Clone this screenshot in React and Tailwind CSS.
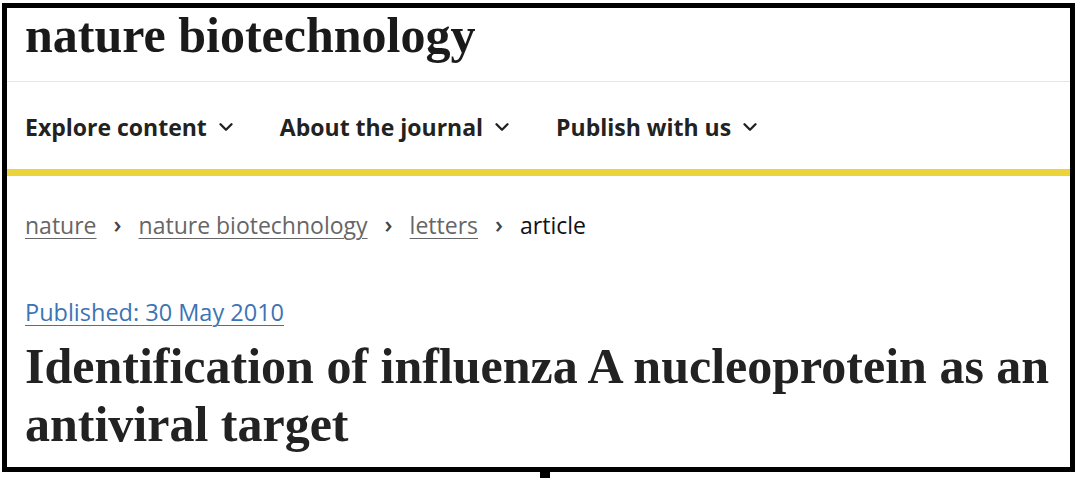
import { ChevronDown } from 'lucide-react'

const navItems = ['Explore content', 'About the journal', 'Publish with us']

const crumbs = ['nature', 'nature biotechnology', 'letters']

export default function App() {
  return (
    <div className="w-[1078px] h-[478px] bg-white overflow-hidden">
      <div className="ml-[2px] mt-[3px] w-[1073px] h-[469px] border-[5px] border-black bg-white flex flex-col overflow-hidden">

        {/* ── Logo ── */}
        <div className="h-[74px] border-b border-[#e6e6e6] px-[18px] flex items-start">
          <span className="font-['Liberation_Serif',serif] font-bold text-[50px] leading-none tracking-[0px] text-[#1a1a1a] mt-[2px]">
            nature biotechnology
          </span>
        </div>

        {/* ── Nav ── */}
        <nav className="h-[87px] px-[18px] flex items-center gap-[43px] pt-[3px]">
          {navItems.map((item) => (
            <div key={item} className="flex items-center gap-[8px]">
              <span className="font-['Open_Sans',sans-serif] font-bold text-[23px] text-[#222]">{item}</span>
              <ChevronDown size={22} strokeWidth={2.6} className="text-[#222]" />
            </div>
          ))}
        </nav>
        <div className="h-[7px] bg-[#ead43a]" />

        {/* ── Breadcrumb ── */}
        <div className="px-[18px] pt-[34px] flex items-center gap-[17px] font-['Open_Sans',sans-serif] text-[23px] leading-[30px]">
          {crumbs.map((c) => (
            <div key={c} className="flex items-center gap-[17px]">
              <span className="text-[#666] underline underline-offset-[4px] decoration-1">{c}</span>
              <span className="text-[#444] text-[24px] font-semibold leading-none -mt-[3px]">›</span>
            </div>
          ))}
          <span className="text-[#111]">article</span>
        </div>

        {/* ── Published ── */}
        <div className="px-[18px] pt-[57px] font-['Open_Sans',sans-serif] text-[23.5px] leading-[30px]">
          <span className="text-[#3b74b5] underline underline-offset-[4px] decoration-1">Published: 30 May 2010</span>
        </div>

        {/* ── Title ── */}
        <h1 className="px-[18px] pt-[10px] font-['Liberation_Serif',serif] font-bold text-[50px] leading-[58px] text-[#222]">
          Identification of influenza A nucleoprotein as an antiviral target
        </h1>
      </div>
      <div className="ml-[540px] w-[10px] h-[6px] bg-black" />
    </div>
  )
}
